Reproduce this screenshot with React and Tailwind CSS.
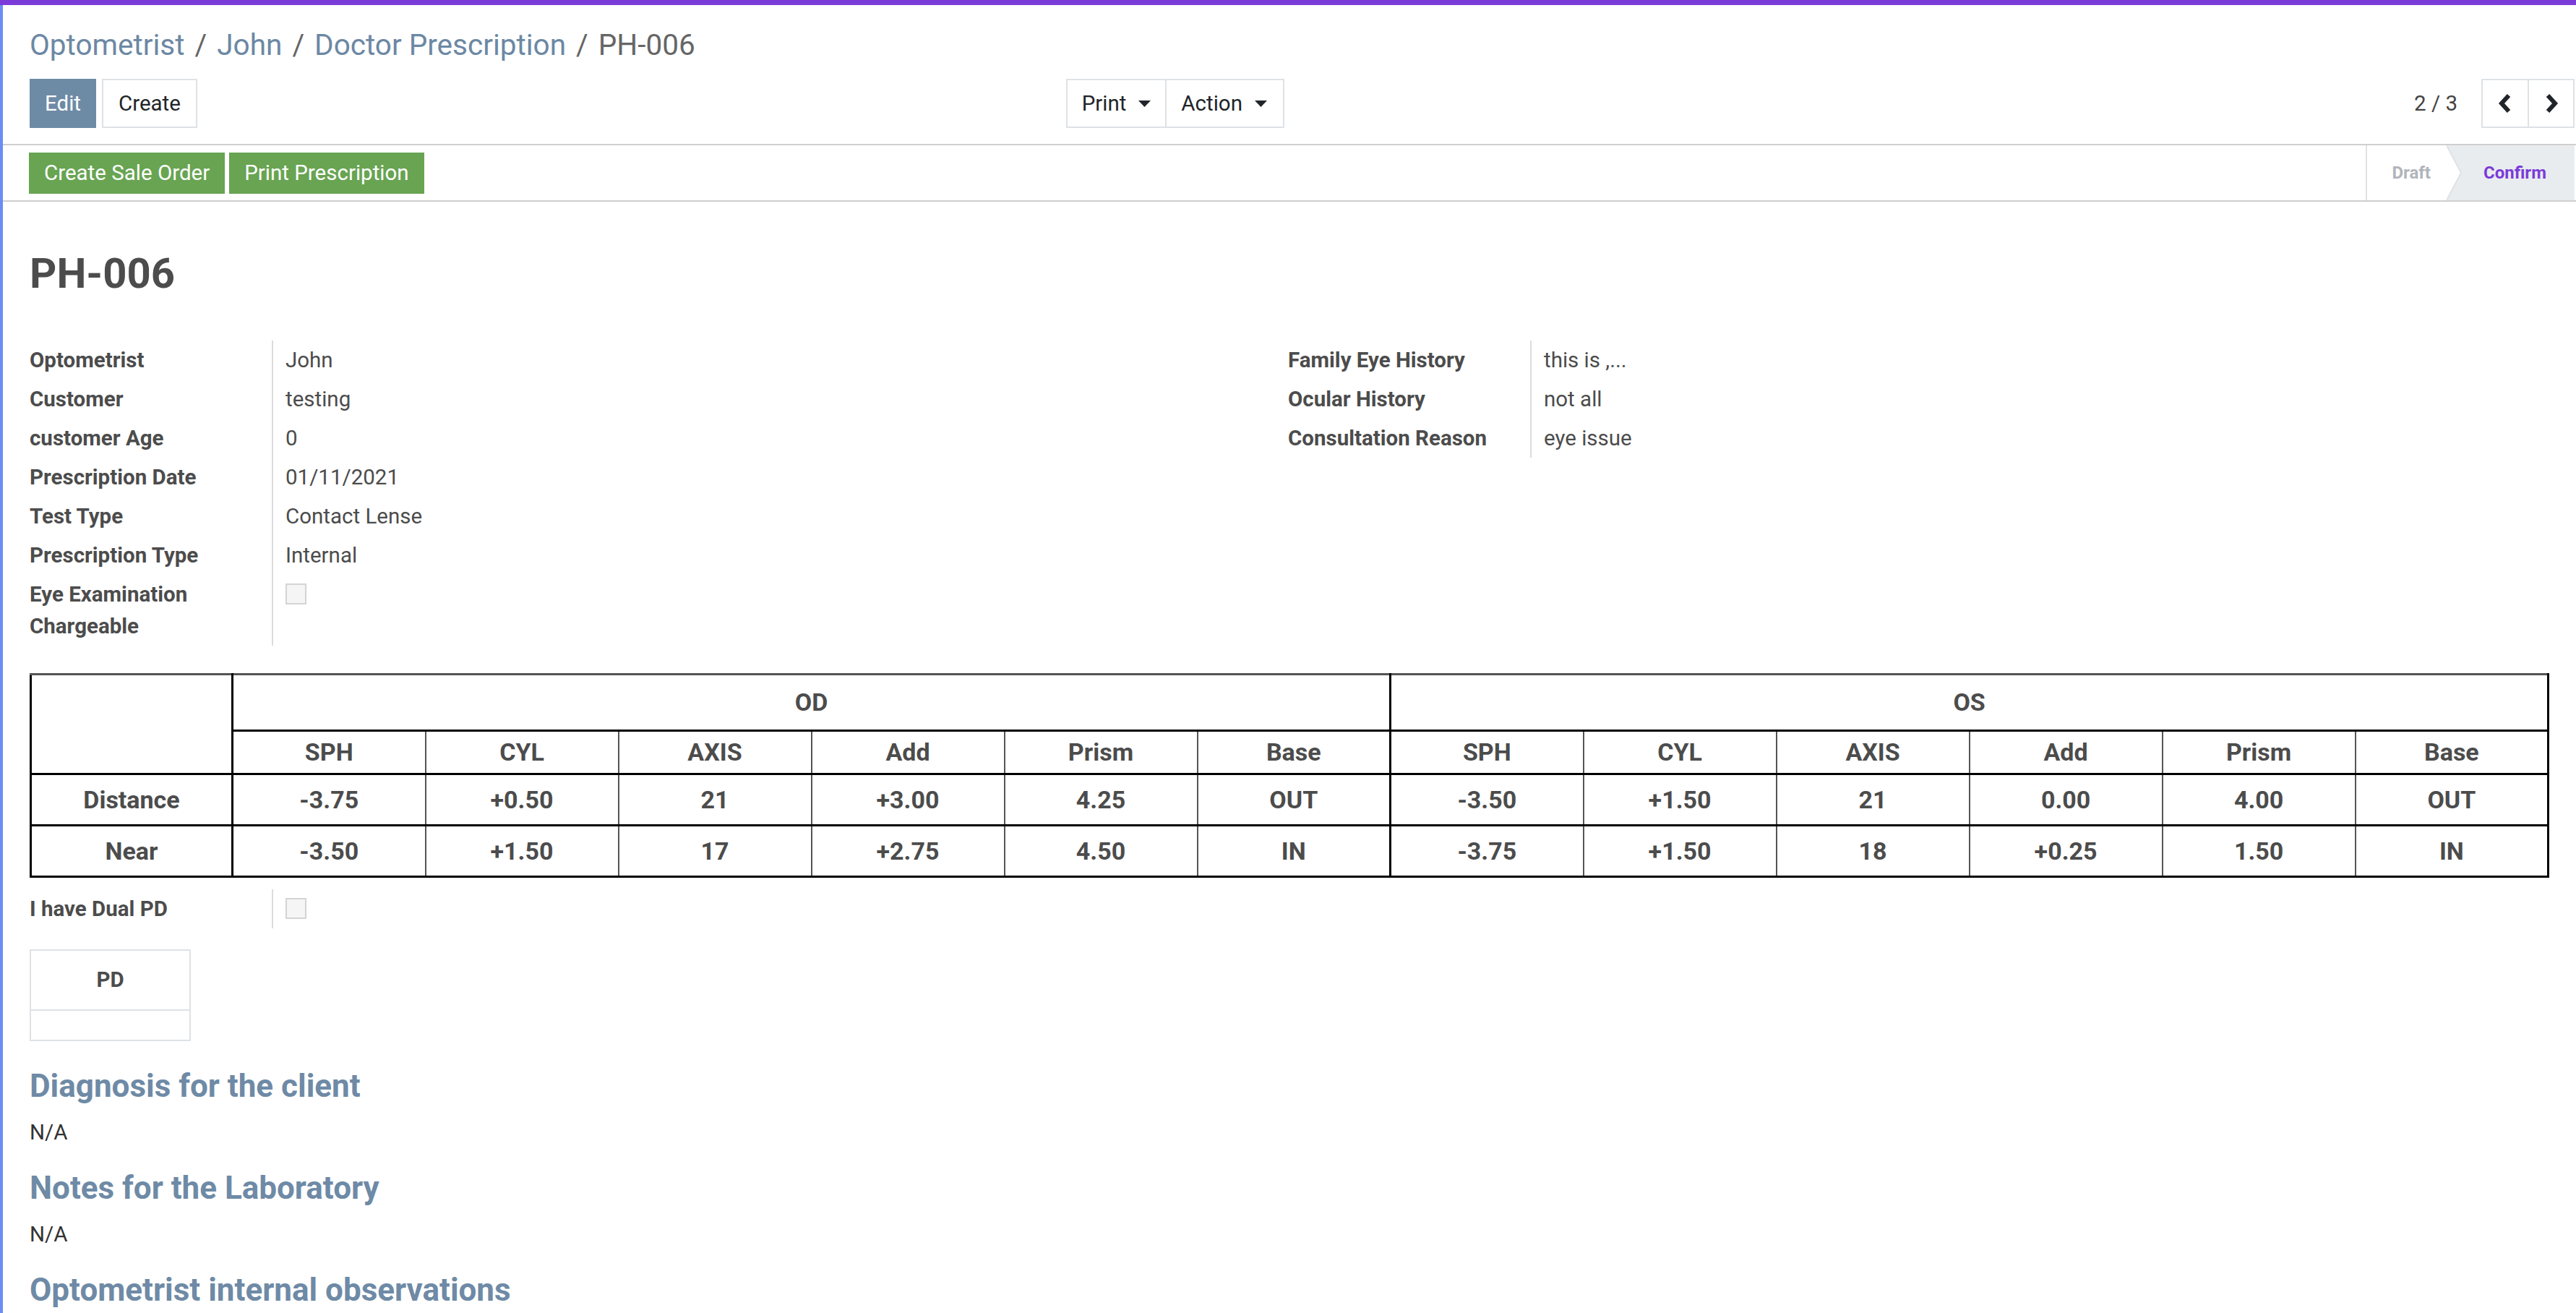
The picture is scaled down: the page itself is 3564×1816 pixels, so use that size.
import React from 'react';

const leftFields = [
  ['Optometrist', 'John'],
  ['Customer', 'testing'],
  ['customer Age', '0'],
  ['Prescription Date', '01/11/2021'],
  ['Test Type', 'Contact Lense'],
  ['Prescription Type', 'Internal'],
];

const rightFields = [
  ['Family Eye History', 'this is ,...'],
  ['Ocular History', 'not all'],
  ['Consultation Reason', 'eye issue'],
];

const cols = ['SPH', 'CYL', 'AXIS', 'Add', 'Prism', 'Base'];

const rows = [
  { name: 'Distance', od: ['-3.75', '+0.50', '21', '+3.00', '4.25', 'OUT'], os: ['-3.50', '+1.50', '21', '0.00', '4.00', 'OUT'] },
  { name: 'Near', od: ['-3.50', '+1.50', '17', '+2.75', '4.50', 'IN'], os: ['-3.75', '+1.50', '18', '+0.25', '1.50', 'IN'] },
];

const Checkbox = () => (
  <div className="mt-[7px] h-[29px] w-[29px] border-2 border-[#d4d4d4] bg-[#f5f5f5]" />
);

const Field = ({ label, children }) => (
  <div className="flex">
    <div className="w-[337px] shrink-0 border-r-2 border-[#dcdcdc] py-[5px] pr-[36px] font-bold leading-[44px]">
      {label}
    </div>
    <div className="py-[5px] pl-[17px] leading-[44px]">{children}</div>
  </div>
);

const Caret = () => (
  <svg width="17" height="9" viewBox="0 0 17 9" className="ml-[17px]">
    <polygon points="0,0 17,0 8.5,9" fill="#212529" />
  </svg>
);

const Chevron = ({ dir }) => (
  <svg width="20" height="28" viewBox="0 0 20 28">
    <polyline
      points={dir === 'left' ? '15,3 5,14 15,25' : '5,3 15,14 5,25'}
      fill="none"
      stroke="#212529"
      strokeWidth="6"
      strokeLinejoin="miter"
    />
  </svg>
);

const Section = ({ title, first }) => (
  <div>
    <h2 className={`${first ? 'mt-[38px]' : 'mt-[31px]'} text-[44px] font-bold leading-[48px] text-[#6e8aa6]`}>
      {title}
    </h2>
    <div className="mt-[18px] leading-[44px] text-[#333]">N/A</div>
  </div>
);

const App = () => {
  const thBase = 'border-[3px] border-black';
  const cell = 'border-y-[3px] border-x-2 border-y-black border-x-[#555]';

  return (
    <div className="h-[1816px] w-[3564px] overflow-hidden bg-white font-['Roboto','Liberation_Sans',sans-serif] text-[29.5px] text-[#4c4c4c]">
      <div className="h-[7px] bg-[#7a3bd8]" />
      <div className="h-[1809px] border-l-4 border-[#6b8cf7]">
        {/* control panel */}
        <div className="pl-[37px] pr-[2px] pt-[31px]">
          <div className="text-[40.5px] leading-[48px] text-[#6c88a4]">
            <span>Optometrist</span>
            <span className="px-[14px] text-[#666]">/</span>
            <span>John</span>
            <span className="px-[14px] text-[#666]">/</span>
            <span>Doctor Prescription</span>
            <span className="px-[14px] text-[#666]">/</span>
            <span className="text-[#666]">PH-006</span>
          </div>
          <div className="mt-[23px] flex h-[68px]">
            <div className="flex w-[1736px]">
              <button className="h-[68px] bg-[#6e8ba6] px-[21px] text-white">Edit</button>
              <button className="ml-[8px] h-[68px] border-2 border-[#dee2e6] bg-white px-[21px] text-[#212529]">Create</button>
              <div className="ml-auto flex h-[68px] border-2 border-[#dee2e6] text-[#212529]">
                <button className="flex items-center pl-[20px] pr-[20px]">
                  Print
                  <Caret />
                </button>
                <button className="flex items-center border-l-2 border-[#dee2e6] pl-[20px] pr-[22px]">
                  Action
                  <Caret />
                </button>
              </div>
            </div>
            <div className="flex flex-1 items-center justify-end">
              <span className="mr-[33px] text-[#444]">2 / 3</span>
              <div className="flex h-[68px] border-2 border-[#dee2e6]">
                <button className="flex w-[62px] items-center justify-center">
                  <Chevron dir="left" />
                </button>
                <button className="flex w-[63px] items-center justify-center border-l-2 border-[#dee2e6]">
                  <Chevron dir="right" />
                </button>
              </div>
            </div>
          </div>
        </div>
        <div className="mt-[22px] h-[2px] bg-[#cfcfcf]" />

        {/* statusbar */}
        <div className="flex h-[76px] items-stretch pl-[36px] pr-[2px]">
          <div className="flex items-center gap-[6px]">
            <button className="h-[57px] bg-[#68a452] px-[21px] text-white">Create Sale Order</button>
            <button className="h-[57px] bg-[#68a452] px-[21px] text-white">Print Prescription</button>
          </div>
          <div className="ml-auto flex items-stretch text-[24px] font-bold">
            <div className="flex items-center border-l-2 border-[#dee2e6] pl-[34px] pr-[22px] text-[#b0b5bb]">Draft</div>
            <div className="relative flex w-[177px] items-center bg-[#e9ecef] pl-[51px] text-[#7a3bd8]">
              <svg className="absolute left-0 top-0 h-full w-[22px]" viewBox="0 0 22 76" preserveAspectRatio="none">
                <polygon points="0,0 20,38 0,76" fill="#ffffff" />
                <polyline points="0,0 20,38 0,76" fill="none" stroke="#dee2e6" strokeWidth="2" />
              </svg>
              Confirm
            </div>
          </div>
        </div>
        <div className="h-[2px] bg-[#cfcfcf]" />

        {/* sheet */}
        <div className="pl-[37px]">
          <h1 className="mt-[62px] text-[58px] font-bold leading-[74px] text-[#4c4c4c]">PH-006</h1>

          <div className="mt-[56px] flex">
            <div className="w-[1741px]">
              {leftFields.map(([l, v]) => (
                <Field key={l} label={l}>{v}</Field>
              ))}
              <Field label="Eye Examination Chargeable">
                <Checkbox />
              </Field>
            </div>
            <div className="w-[1741px]">
              {rightFields.map(([l, v]) => (
                <Field key={l} label={l}>{v}</Field>
              ))}
            </div>
          </div>

          <table className="mt-[38px] w-[3482px] table-fixed border-collapse text-center text-[34px] font-bold">
            <colgroup>
              <col className="w-[279px]" />
              {Array.from({ length: 12 }).map((_, i) => (
                <col key={i} className="w-[267px]" />
              ))}
            </colgroup>
            <thead>
              <tr className="h-[78px]">
                <th rowSpan={2} className={`${thBase} border-t-[#555]`} />
                <th colSpan={6} className={`${thBase} border-t-[#555]`}>OD</th>
                <th colSpan={6} className={`${thBase} border-t-[#555]`}>OS</th>
              </tr>
              <tr className="h-[60px]">
                {cols.map((c, i) => (
                  <th key={'od' + c} className={i === 0 ? `${cell} border-l-[3px] border-l-black` : cell}>{c}</th>
                ))}
                {cols.map((c, i) => (
                  <th key={'os' + c} className={i === 0 ? `${cell} border-l-[3px] border-l-black` : i === 5 ? `${cell} border-r-[3px] border-r-black` : cell}>{c}</th>
                ))}
              </tr>
            </thead>
            <tbody>
              {rows.map((r) => (
                <tr key={r.name} className="h-[71px]">
                  <td className={thBase}>{r.name}</td>
                  {r.od.map((v, i) => (
                    <td key={'od' + i} className={i === 0 ? `${cell} border-l-[3px] border-l-black` : cell}>{v}</td>
                  ))}
                  {r.os.map((v, i) => (
                    <td key={'os' + i} className={i === 0 ? `${cell} border-l-[3px] border-l-black` : i === 5 ? `${cell} border-r-[3px] border-r-black` : cell}>{v}</td>
                  ))}
                </tr>
              ))}
            </tbody>
          </table>

          <div className="mt-[16px] w-[1741px]">
            <Field label="I have Dual PD">
              <Checkbox />
            </Field>
          </div>

          <div className="mt-[29px] w-[223px] border-2 border-[#dee2e6]">
            <div className="flex h-[83px] items-center justify-center border-b-2 border-[#dee2e6] font-bold">PD</div>
            <div className="h-[40px]" />
          </div>

          <Section title="Diagnosis for the client" first />
          <Section title="Notes for the Laboratory" />
          <h2 className="mt-[31px] text-[44px] font-bold leading-[48px] text-[#6e8aa6]">Optometrist internal observations</h2>
        </div>
      </div>
    </div>
  );
};

export default App;
